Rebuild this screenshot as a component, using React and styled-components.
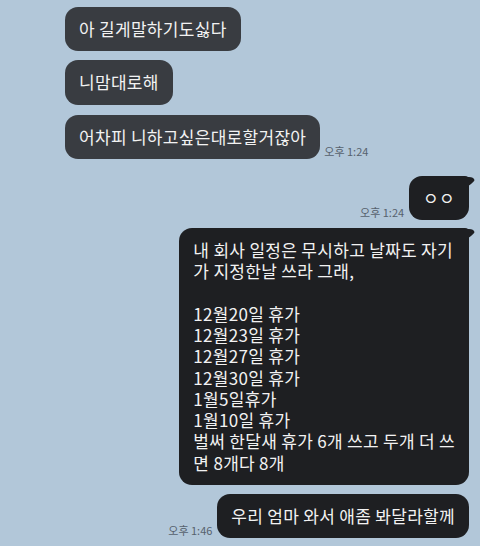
import React from "react";
import styled, { createGlobalStyle } from "styled-components";

const GlobalStyle = createGlobalStyle`
  html, body {
    margin: 0;
    padding: 0;
    background: #b2c7d9;
  }
  body {
    font-family: "Noto Sans CJK KR", "Noto Sans", sans-serif;
  }
`;

const ChatRoom = styled.div`
  width: 480px;
  height: 546px;
  overflow: hidden;
  background: #b2c7d9;
  display: flex;
  flex-direction: column;
  padding-top: 7px;
  box-sizing: border-box;
`;

const Row = styled.div`
  display: flex;
  align-items: flex-end;
  gap: ${(p) => (p.$mine ? 5 : 4)}px;
  justify-content: ${(p) => (p.$mine ? "flex-end" : "flex-start")};
  padding: ${(p) => (p.$mine ? "0 11px 0 0" : "0 0 0 65px")};
  margin-top: ${(p) => p.$space || 0}px;
`;

const Bubble = styled.div`
  position: relative;
  background: ${(p) => (p.$mine ? "#1e1f22" : "#393c41")};
  color: #f2f2f2;
  font-size: 17px;
  letter-spacing: 0.3px;
  padding: 11px 14px 12px;
  border-radius: 13px;
  border-top-right-radius: ${(p) => (p.$tail ? "4px" : "13px")};
`;

const Line = styled.div`
  height: 21.25px;
  line-height: 21.25px;
  white-space: pre;
`;

const Tail = styled.svg`
  position: absolute;
  top: 1px;
  right: -6px;
  width: 9px;
  height: 12px;
`;

const Time = styled.span`
  font-size: 11px;
  line-height: 14px;
  color: #56616d;
  white-space: nowrap;
  margin-bottom: 1px;
`;

function Message({ mine, tail, time, space, text }) {
  return (
    <Row $mine={mine} $space={space}>
      {mine && time && <Time>{time}</Time>}
      <Bubble $mine={mine} $tail={tail}>
        {text.split("\n").map((line, i) => (
          <Line key={i}>{line || " "}</Line>
        ))}
        {tail && (
          <Tail viewBox="0 0 9 12">
            <path d="M0 0 H3 C6 0 8 1 8.5 3 C8 5 5 7 0 11 Z" fill="#1e1f22" />
          </Tail>
        )}
      </Bubble>
      {!mine && time && <Time>{time}</Time>}
    </Row>
  );
}

const notice = `내 회사 일정은 무시하고 날짜도 자기
가 지정한날 쓰라 그래,

12월20일 휴가
12월23일 휴가
12월27일 휴가
12월30일 휴가
1월5일휴가
1월10일 휴가
벌써 한달새 휴가 6개 쓰고 두개 더 쓰
면 8개다 8개`;

export default function App() {
  return (
    <>
      <GlobalStyle />
      <ChatRoom>
        <Message text="아 길게말하기도싫다" />
        <Message space={9} text="니맘대로해" />
        <Message space={10} time="오후 1:24" text="어차피 니하고싶은대로할거잖아" />
        <Message mine tail space={17} time="오후 1:24" text="ㅇㅇ" />
        <Message mine tail space={8} text={notice} />
        <Message mine space={9} time="오후 1:46" text="우리 엄마 와서 애좀 봐달라할께" />
      </ChatRoom>
    </>
  );
}
